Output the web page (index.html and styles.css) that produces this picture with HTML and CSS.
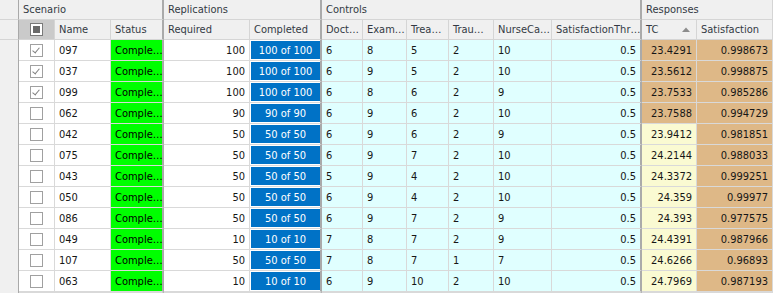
FILE: index.html
```html
<!DOCTYPE html>
<html>
<head>
<meta charset="utf-8">
<link rel="stylesheet" href="styles.css">
</head>
<body>
<div class="grid">
  <div class="gut g1"></div>
  <div class="gut g2"></div>
  <div class="gut gb"></div>

  <div class="h grp span3 sep">Scenario</div>
  <div class="h grp span2 sep">Replications</div>
  <div class="h grp span6 sep">Controls</div>
  <div class="h grp span2">Responses</div>

  <div class="h hchk"><span class="box ind"></span></div>
  <div class="h">Name</div>
  <div class="h sep">Status</div>
  <div class="h">Required</div>
  <div class="h sep">Completed</div>
  <div class="h">Doct…</div>
  <div class="h">Exam…</div>
  <div class="h">Trea…</div>
  <div class="h">Trau…</div>
  <div class="h">NurseCa…</div>
  <div class="h sep">SatisfactionThr…</div>
  <div class="h sort">TC<svg class="arrow" width="8" height="5" viewBox="0 0 8 5"><polygon points="0,5 8,5 4,0.5" fill="#8c8c8c"/></svg></div>
  <div class="h">Satisfaction</div>

  <div class="row">
    <div class="c chk"><span class="box on"></span></div><div class="c">097</div><div class="c st sep">Comple…</div><div class="c r">100</div><div class="c done sep"><span>100 of 100</span></div>
    <div class="c ctl">6</div><div class="c ctl">8</div><div class="c ctl">5</div><div class="c ctl">2</div><div class="c ctl">10</div><div class="c ctl r sep">0.5</div><div class="c tan r">23.4291</div><div class="c tan r">0.998673</div>
  </div>
  <div class="row">
    <div class="c chk"><span class="box on"></span></div><div class="c">037</div><div class="c st sep">Comple…</div><div class="c r">100</div><div class="c done sep"><span>100 of 100</span></div>
    <div class="c ctl">6</div><div class="c ctl">9</div><div class="c ctl">5</div><div class="c ctl">2</div><div class="c ctl">10</div><div class="c ctl r sep">0.5</div><div class="c tan r">23.5612</div><div class="c tan r">0.998875</div>
  </div>
  <div class="row">
    <div class="c chk"><span class="box on"></span></div><div class="c">099</div><div class="c st sep">Comple…</div><div class="c r">100</div><div class="c done sep"><span>100 of 100</span></div>
    <div class="c ctl">6</div><div class="c ctl">8</div><div class="c ctl">6</div><div class="c ctl">2</div><div class="c ctl">9</div><div class="c ctl r sep">0.5</div><div class="c tan r">23.7533</div><div class="c tan r">0.985286</div>
  </div>
  <div class="row">
    <div class="c chk"><span class="box"></span></div><div class="c">062</div><div class="c st sep">Comple…</div><div class="c r">90</div><div class="c done sep"><span>90 of 90</span></div>
    <div class="c ctl">6</div><div class="c ctl">9</div><div class="c ctl">6</div><div class="c ctl">2</div><div class="c ctl">10</div><div class="c ctl r sep">0.5</div><div class="c tan r">23.7588</div><div class="c tan r">0.994729</div>
  </div>
  <div class="row">
    <div class="c chk"><span class="box"></span></div><div class="c">042</div><div class="c st sep">Comple…</div><div class="c r">50</div><div class="c done sep"><span>50 of 50</span></div>
    <div class="c ctl">6</div><div class="c ctl">9</div><div class="c ctl">6</div><div class="c ctl">2</div><div class="c ctl">9</div><div class="c ctl r sep">0.5</div><div class="c pale r">23.9412</div><div class="c tan r">0.981851</div>
  </div>
  <div class="row">
    <div class="c chk"><span class="box"></span></div><div class="c">075</div><div class="c st sep">Comple…</div><div class="c r">50</div><div class="c done sep"><span>50 of 50</span></div>
    <div class="c ctl">6</div><div class="c ctl">9</div><div class="c ctl">7</div><div class="c ctl">2</div><div class="c ctl">10</div><div class="c ctl r sep">0.5</div><div class="c pale r">24.2144</div><div class="c tan r">0.988033</div>
  </div>
  <div class="row">
    <div class="c chk"><span class="box"></span></div><div class="c">043</div><div class="c st sep">Comple…</div><div class="c r">50</div><div class="c done sep"><span>50 of 50</span></div>
    <div class="c ctl">5</div><div class="c ctl">9</div><div class="c ctl">4</div><div class="c ctl">2</div><div class="c ctl">10</div><div class="c ctl r sep">0.5</div><div class="c pale r">24.3372</div><div class="c tan r">0.999251</div>
  </div>
  <div class="row">
    <div class="c chk"><span class="box"></span></div><div class="c">050</div><div class="c st sep">Comple…</div><div class="c r">50</div><div class="c done sep"><span>50 of 50</span></div>
    <div class="c ctl">6</div><div class="c ctl">9</div><div class="c ctl">4</div><div class="c ctl">2</div><div class="c ctl">10</div><div class="c ctl r sep">0.5</div><div class="c pale r">24.359</div><div class="c tan r">0.99977</div>
  </div>
  <div class="row">
    <div class="c chk"><span class="box"></span></div><div class="c">086</div><div class="c st sep">Comple…</div><div class="c r">50</div><div class="c done sep"><span>50 of 50</span></div>
    <div class="c ctl">6</div><div class="c ctl">9</div><div class="c ctl">7</div><div class="c ctl">2</div><div class="c ctl">9</div><div class="c ctl r sep">0.5</div><div class="c pale r">24.393</div><div class="c tan r">0.977575</div>
  </div>
  <div class="row">
    <div class="c chk"><span class="box"></span></div><div class="c">049</div><div class="c st sep">Comple…</div><div class="c r">10</div><div class="c done sep"><span>10 of 10</span></div>
    <div class="c ctl">7</div><div class="c ctl">8</div><div class="c ctl">7</div><div class="c ctl">2</div><div class="c ctl">9</div><div class="c ctl r sep">0.5</div><div class="c pale r">24.4391</div><div class="c tan r">0.987966</div>
  </div>
  <div class="row">
    <div class="c chk"><span class="box"></span></div><div class="c">107</div><div class="c st sep">Comple…</div><div class="c r">50</div><div class="c done sep"><span>50 of 50</span></div>
    <div class="c ctl">7</div><div class="c ctl">8</div><div class="c ctl">7</div><div class="c ctl">1</div><div class="c ctl">7</div><div class="c ctl r sep">0.5</div><div class="c pale r">24.6266</div><div class="c tan r">0.96893</div>
  </div>
  <div class="row">
    <div class="c chk"><span class="box"></span></div><div class="c">063</div><div class="c st sep">Comple…</div><div class="c r">10</div><div class="c done sep"><span>10 of 10</span></div>
    <div class="c ctl">6</div><div class="c ctl">9</div><div class="c ctl">10</div><div class="c ctl">2</div><div class="c ctl">10</div><div class="c ctl r sep">0.5</div><div class="c pale r">24.7969</div><div class="c tan r">0.987193</div>
  </div>
  <div class="row">
    <div class="c chk"></div><div class="c"></div><div class="c st sep"></div><div class="c"></div><div class="c sep"></div>
    <div class="c ctl"></div><div class="c ctl"></div><div class="c ctl"></div><div class="c ctl"></div><div class="c ctl"></div><div class="c ctl sep"></div><div class="c pale"></div><div class="c tan"></div>
  </div>
</div>
</body>
</html>
```

FILE: styles.css
```css
html, body {
  margin: 0;
  padding: 0;
  background: #ffffff;
}

body {
  font-family: "DejaVu Sans Condensed", "DejaVu Sans", sans-serif;
  font-stretch: condensed;
  font-size: 11px;
  overflow: hidden;
}

.grid {
  display: grid;
  grid-template-columns: 19px 36px 56px 53px 86px 72px 41px 44px 42px 45px 58px 90px 55px 76px;
  grid-template-rows: 20px 20px repeat(12, 21px) 1px;
  width: 773px;
}

.row {
  display: contents;
}

.gut {
  background: #f0f0f0;
  border-right: 1px solid #a9a9a9;
  box-sizing: border-box;
}
.g1 { grid-area: 1 / 1; border-bottom: 1px solid #d5d5d5; }
.g2 { grid-area: 2 / 1; border-bottom: 1px solid #d5d5d5; }
.gb { grid-column: 1; grid-row: 3 / -1; }

.h {
  box-sizing: border-box;
  background: #f0f0f0;
  color: #333a44;
  border-right: 1px solid #d5d5d5;
  border-bottom: 1px solid #d5d5d5;
  padding: 0 4px;
  display: flex;
  align-items: center;
  white-space: nowrap;
  overflow: hidden;
}

.span2 { grid-column: span 2; }
.span3 { grid-column: span 3; }
.span6 { grid-column: span 6; }

.hchk {
  background: #cacaca;
  justify-content: center;
  padding: 0;
}

.sort {
  justify-content: space-between;
  padding-right: 6px;
}

.arrow {
  display: block;
}

.c {
  box-sizing: border-box;
  border-right: 1px solid #d9d9d9;
  border-bottom: 1px solid #d9d9d9;
  padding: 0 4px;
  display: flex;
  align-items: center;
  white-space: nowrap;
  overflow: hidden;
  color: #161616;
}

.r {
  justify-content: flex-end;
}

.h.sep, .c.sep {
  border-right: 2px solid #aaaaaa;
}

.chk {
  justify-content: center;
  padding: 0;
}

.box {
  box-sizing: border-box;
  width: 13px;
  height: 13px;
  border: 1px solid #a0a0a0;
  background: #ffffff;
  position: relative;
  display: block;
}

.box.on::after {
  content: "";
  position: absolute;
  left: 3px;
  top: 1px;
  width: 3px;
  height: 6px;
  border-right: 1px solid #808080;
  border-bottom: 1px solid #808080;
  transform: rotate(40deg);
}

.box.ind {
  border-color: #7a7a7a;
}
.box.ind::after {
  content: "";
  position: absolute;
  left: 2px;
  top: 2px;
  width: 7px;
  height: 7px;
  background: #6a6a6a;
}

.st {
  background: #00ff00;
  color: #000000;
}

.done {
  padding: 1px 0 1px 1px;
  align-items: stretch;
}
.done span {
  flex: 1;
  background: #0072c6;
  color: #ffffff;
  display: flex;
  align-items: center;
  justify-content: center;
}

.ctl {
  background: #e0ffff;
}

.tan {
  background: #deb887;
}

.pale {
  background: #fafad2;
}
```
